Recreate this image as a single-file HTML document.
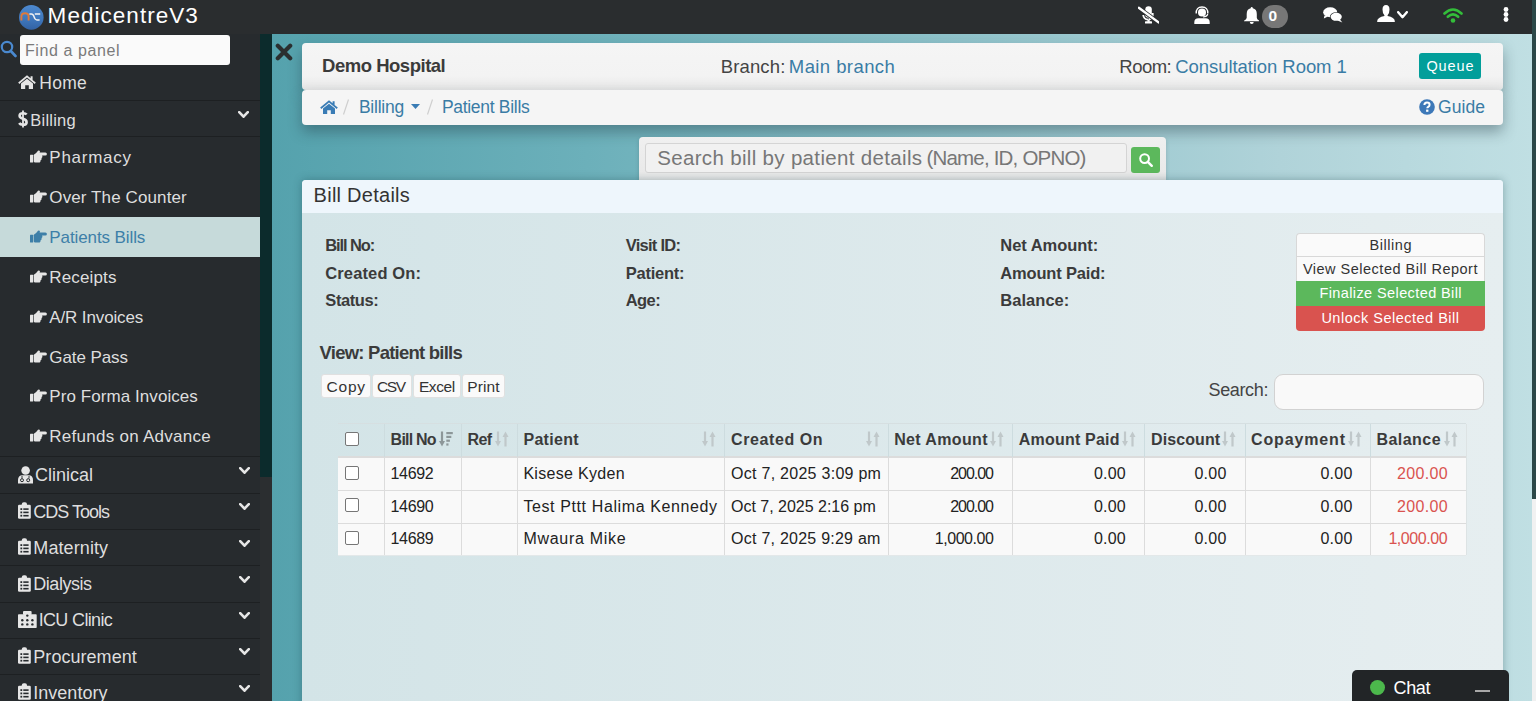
<!DOCTYPE html>
<html><head><meta charset="utf-8"><title>Patient Bills</title><style>
*{box-sizing:border-box;margin:0;padding:0}
html,body{width:1536px;height:701px;overflow:hidden;background:#26292c;font-family:"Liberation Sans",sans-serif}
.t{position:absolute;white-space:pre;line-height:1;font-family:"Liberation Sans",sans-serif}
.a{position:absolute}
#top{left:0;top:0;width:1536px;height:34px;background:#2a2d2f}
#side{left:0;top:34px;width:260px;height:667px;background:#272b2e}
.sep{position:absolute;left:0;width:260px;height:1px;background:#1d2022}
#sbtrack{left:260px;top:34px;width:12px;height:667px;background:#2b2e30}
#sbthumb{left:260px;top:34px;width:12px;height:443px;background:#0c2b2c}
#main{left:272px;top:34px;width:1260px;height:667px;background:linear-gradient(to right,#55a2ad 0%,#6cb0ba 25%,#90c3cb 55%,#b0d3d9 80%,#c0dfe3 100%)}
#rtrack{left:1532px;top:0;width:4px;height:701px;background:#f1f1f1}
#rthumb{left:1532px;top:0;width:4px;height:499px;background:#2c4848}
.card{position:absolute;left:302px;width:1201px;border-radius:4px;box-shadow:0 7px 14px rgba(30,50,60,.38)}
#hdr{top:43px;height:47px;background:linear-gradient(to bottom,#f5f5f5 0%,#f3f3f3 70%,#e6e6e6 100%)}
#bc{top:90px;height:35px;background:#f5f5f5}
#srch{left:639px;top:137px;width:527px;height:43px;background:linear-gradient(#f0f0f0,#e8e8e8);border-radius:4px 4px 0 0;box-shadow:0 2px 4px rgba(0,0,0,.15)}
#sinput{left:644.5px;top:143px;width:482px;height:30px;border:1px solid #d4d4d4;border-radius:3px;background:#f1f1f1}
#sbtn{left:1131px;top:147px;width:29px;height:26px;background:#5cb85c;border-radius:3px}
#panel{left:302px;top:180px;width:1201px;height:530px;border-radius:4px 4px 0 0;background:linear-gradient(to right,#d3e4e7,#e6eef0);box-shadow:0 0 8px rgba(20,60,70,.35);overflow:hidden}
#phead{left:0;top:0;width:1201px;height:33px;background:#eef6fc}
#queue{left:1418.5px;top:53px;width:62px;height:26px;background:#029e9a;border-radius:3px}
.grp{position:absolute;left:1296px;width:189px;height:25px}
.dtb{position:absolute;top:374px;height:24px;background:#fafafa;border:1px solid #e0e0e0;border-radius:3px}
#tsearch{left:1274px;top:373.5px;width:210px;height:36px;background:#f9f9f9;border:1px solid #d2d2d2;border-radius:9px}
#tbl{left:338px;top:423.5px;width:1128px;height:132px}
.hl{position:absolute;height:1px;background:#dcdcdc}
.vl{position:absolute;width:1px;background:#dcdcdc}
.cb{position:absolute;width:14px;height:14px;border:1px solid #767676;border-radius:2px;background:#fff}
#chat{left:1352px;top:670px;width:157px;height:40px;background:#222527;border-radius:5px 5px 0 0}
</style></head>
<body>
<div class="a" id="top"></div>
<div class="a" id="side"></div>
<div class="a" style="left:20px;top:35px;width:210px;height:30px;background:#fafafa;border-radius:3px"></div>
<div class="a" style="left:0;top:217px;width:260px;height:40px;background:#c6dada"></div>
<div class="sep" style="top:100px"></div>
<div class="sep" style="top:136px"></div>
<div class="sep" style="top:456px"></div>
<div class="sep" style="top:493px"></div>
<div class="sep" style="top:529px"></div>
<div class="sep" style="top:565px"></div>
<div class="sep" style="top:602px"></div>
<div class="sep" style="top:638px"></div>
<div class="sep" style="top:674px"></div>
<div class="a" id="sbtrack"></div>
<div class="a" id="sbthumb"></div>
<div class="a" id="main"></div>
<div class="a" id="rtrack"></div>
<div class="a" id="rthumb"></div>
<div class="card" id="hdr"></div>
<div class="card" id="bc"></div>
<div class="a" id="queue"></div>
<div class="a" id="srch"></div>
<div class="a" id="sinput"></div>
<div class="a" id="sbtn"></div>
<div class="card" id="panel"><div class="a" id="phead"></div></div>
<div class="a" id="tsearch"></div>
<div class="a" style="left:1296px;top:232.5px;width:189px;height:24px;background:#fafafa;border:1px solid #d8d8d8;border-bottom:none;border-radius:4px 4px 0 0"></div>
<div class="a" style="left:1296px;top:256px;width:189px;height:25px;background:#fafafa;border:1px solid #d8d8d8;border-bottom:none"></div>
<div class="a" style="left:1296px;top:281px;width:189px;height:24.5px;background:#5cb85c"></div>
<div class="a" style="left:1296px;top:305.5px;width:189px;height:25px;background:#d9534f;border-radius:0 0 4px 4px"></div>
<div class="dtb" style="left:321px;width:50px"></div>
<div class="dtb" style="left:372px;width:40px"></div>
<div class="dtb" style="left:413px;width:48px"></div>
<div class="dtb" style="left:462px;width:43px"></div>
<div class="a" style="left:338px;top:457px;width:1128px;height:98.5px;background:#f9f9f9"></div>
<div class="hl" style="left:338px;top:423px;width:1128px;background:#d6dfe1"></div>
<div class="hl" style="left:338px;top:456px;width:1128px;height:2px;background:#dcdcdc"></div>
<div class="hl" style="left:338px;top:490px;width:1128px"></div>
<div class="hl" style="left:338px;top:522.5px;width:1128px"></div>
<div class="hl" style="left:338px;top:555px;width:1128px;background:#e3e8e9"></div>
<div class="vl" style="left:384px;top:457px;height:98px"></div>
<div class="vl" style="left:384px;top:424px;height:33px;background:#cddcdf"></div>
<div class="vl" style="left:461px;top:457px;height:98px"></div>
<div class="vl" style="left:461px;top:424px;height:33px;background:#cddcdf"></div>
<div class="vl" style="left:517px;top:457px;height:98px"></div>
<div class="vl" style="left:517px;top:424px;height:33px;background:#cddcdf"></div>
<div class="vl" style="left:724px;top:457px;height:98px"></div>
<div class="vl" style="left:724px;top:424px;height:33px;background:#cddcdf"></div>
<div class="vl" style="left:888px;top:457px;height:98px"></div>
<div class="vl" style="left:888px;top:424px;height:33px;background:#cddcdf"></div>
<div class="vl" style="left:1012px;top:457px;height:98px"></div>
<div class="vl" style="left:1012px;top:424px;height:33px;background:#cddcdf"></div>
<div class="vl" style="left:1144px;top:457px;height:98px"></div>
<div class="vl" style="left:1144px;top:424px;height:33px;background:#cddcdf"></div>
<div class="vl" style="left:1245px;top:457px;height:98px"></div>
<div class="vl" style="left:1245px;top:424px;height:33px;background:#cddcdf"></div>
<div class="vl" style="left:1370px;top:457px;height:98px"></div>
<div class="vl" style="left:1370px;top:424px;height:33px;background:#cddcdf"></div>
<div class="vl" style="left:1466px;top:424px;height:131px;background:#dde3e4"></div>
<div class="cb" style="left:344.5px;top:431.5px"></div>
<div class="cb" style="left:344.5px;top:465.5px"></div>
<div class="cb" style="left:344.5px;top:498px"></div>
<div class="cb" style="left:344.5px;top:530.5px"></div>
<svg class="a" style="left:439px;top:430.5px;" width="14" height="16" viewBox="0 0 14 16"><path d="M3 0.5 V11" stroke="#8d9799" stroke-width="2.2"/><path d="M0 10 H6 L3 15.5 Z" fill="#8d9799"/><rect x="7.3" y="1" width="6.5" height="2.2" fill="#8d9799"/><rect x="7.3" y="4.8" width="5" height="2.2" fill="#8d9799"/><rect x="7.3" y="8.6" width="3.6" height="2.2" fill="#8d9799"/><rect x="7.3" y="12.4" width="2.2" height="2.2" fill="#8d9799"/></svg>
<svg class="a" style="left:494.5px;top:430.5px;" width="14" height="16" viewBox="0 0 14 16"><path d="M3 0.5 V11" stroke="#c0c8ca" stroke-width="2.2"/><path d="M0 10 H6 L3 15.5 Z" fill="#c0c8ca"/><path d="M10.5 5 V15.5" stroke="#c0c8ca" stroke-width="2.2"/><path d="M7.5 6 H13.5 L10.5 0.5 Z" fill="#c0c8ca"/></svg>
<svg class="a" style="left:701.5px;top:430.5px;" width="14" height="16" viewBox="0 0 14 16"><path d="M3 0.5 V11" stroke="#c0c8ca" stroke-width="2.2"/><path d="M0 10 H6 L3 15.5 Z" fill="#c0c8ca"/><path d="M10.5 5 V15.5" stroke="#c0c8ca" stroke-width="2.2"/><path d="M7.5 6 H13.5 L10.5 0.5 Z" fill="#c0c8ca"/></svg>
<svg class="a" style="left:865.5px;top:430.5px;" width="14" height="16" viewBox="0 0 14 16"><path d="M3 0.5 V11" stroke="#c0c8ca" stroke-width="2.2"/><path d="M0 10 H6 L3 15.5 Z" fill="#c0c8ca"/><path d="M10.5 5 V15.5" stroke="#c0c8ca" stroke-width="2.2"/><path d="M7.5 6 H13.5 L10.5 0.5 Z" fill="#c0c8ca"/></svg>
<svg class="a" style="left:990px;top:430.5px;" width="14" height="16" viewBox="0 0 14 16"><path d="M3 0.5 V11" stroke="#c0c8ca" stroke-width="2.2"/><path d="M0 10 H6 L3 15.5 Z" fill="#c0c8ca"/><path d="M10.5 5 V15.5" stroke="#c0c8ca" stroke-width="2.2"/><path d="M7.5 6 H13.5 L10.5 0.5 Z" fill="#c0c8ca"/></svg>
<svg class="a" style="left:1122px;top:430.5px;" width="14" height="16" viewBox="0 0 14 16"><path d="M3 0.5 V11" stroke="#c0c8ca" stroke-width="2.2"/><path d="M0 10 H6 L3 15.5 Z" fill="#c0c8ca"/><path d="M10.5 5 V15.5" stroke="#c0c8ca" stroke-width="2.2"/><path d="M7.5 6 H13.5 L10.5 0.5 Z" fill="#c0c8ca"/></svg>
<svg class="a" style="left:1221.5px;top:430.5px;" width="14" height="16" viewBox="0 0 14 16"><path d="M3 0.5 V11" stroke="#c0c8ca" stroke-width="2.2"/><path d="M0 10 H6 L3 15.5 Z" fill="#c0c8ca"/><path d="M10.5 5 V15.5" stroke="#c0c8ca" stroke-width="2.2"/><path d="M7.5 6 H13.5 L10.5 0.5 Z" fill="#c0c8ca"/></svg>
<svg class="a" style="left:1347.5px;top:430.5px;" width="14" height="16" viewBox="0 0 14 16"><path d="M3 0.5 V11" stroke="#c0c8ca" stroke-width="2.2"/><path d="M0 10 H6 L3 15.5 Z" fill="#c0c8ca"/><path d="M10.5 5 V15.5" stroke="#c0c8ca" stroke-width="2.2"/><path d="M7.5 6 H13.5 L10.5 0.5 Z" fill="#c0c8ca"/></svg>
<svg class="a" style="left:1443.5px;top:430.5px;" width="14" height="16" viewBox="0 0 14 16"><path d="M3 0.5 V11" stroke="#c0c8ca" stroke-width="2.2"/><path d="M0 10 H6 L3 15.5 Z" fill="#c0c8ca"/><path d="M10.5 5 V15.5" stroke="#c0c8ca" stroke-width="2.2"/><path d="M7.5 6 H13.5 L10.5 0.5 Z" fill="#c0c8ca"/></svg>
<div class="a" id="chat"></div>
<svg class="a" style="left:18.5px;top:4.6px;" width="25" height="25" viewBox="0 0 25 25"><defs><linearGradient id="lg" x1="0" y1="0" x2="0" y2="1"><stop offset="0" stop-color="#4d89cf"/><stop offset="0.55" stop-color="#3f78bd"/><stop offset="1" stop-color="#3262a4"/></linearGradient></defs>
<circle cx="12.3" cy="12.4" r="12.3" fill="url(#lg)"/>
<path d="M2.4 15.6 V11.6 Q2.4 8.3 6 8.3 Q9.6 8.3 9.6 11.6 V15.6" stroke="#e07a3a" stroke-width="1.9" fill="none"/>
<path d="M10.4 8.9 H12.4 Q14.1 8.9 15 11.6 Q16 14.9 18 14.9 H20.6 M15.8 8.9 H21.2" stroke="#f4f4f4" stroke-width="1.5" fill="none"/></svg>
<svg class="a" style="left:0px;top:40px;" width="17" height="18" viewBox="0 0 17 18"><circle cx="7" cy="7" r="5.2" stroke="#4a89cf" stroke-width="2.2" fill="none"/><path d="M10.8 11 L15.5 16" stroke="#4a89cf" stroke-width="2.6" stroke-linecap="round"/></svg>
<svg class="a" style="left:18px;top:75px;" width="18" height="14" viewBox="0 0 18 14"><path d="M9 0.3 L0.2 7.6 L1.3 8.9 L9 2.5 L16.7 8.9 L17.8 7.6 L14.6 4.9 V1.2 H12.6 V3.2 Z" fill="#e6e6e6"/><path d="M3 8.6 L9 3.7 L15 8.6 V14 H10.8 V10.2 H7.2 V14 H3 Z" fill="#e6e6e6"/></svg>
<svg class="a" style="left:17.5px;top:109.5px;" width="10" height="18" viewBox="0 0 10 18"><path d="M5 0.5 V17.5" stroke="#e6e6e6" stroke-width="1.8"/><path d="M8.6 4.6 Q7.6 3.2 5 3.2 Q1.6 3.2 1.6 5.8 Q1.6 7.9 5 8.8 Q8.6 9.8 8.6 12.2 Q8.6 14.8 5 14.8 Q2.2 14.8 1.2 13" stroke="#e6e6e6" stroke-width="2.6" fill="none"/></svg>
<svg class="a" style="left:29.6px;top:150.3px;" width="17" height="13" viewBox="0 0 17 13"><rect x="0" y="4.8" width="3.2" height="7.8" rx="0.5" fill="#e6e6e6"/><path d="M3.8 4.8 Q6.5 3.2 8 0.8 Q9.2 -0.2 10 1.2 L9.6 2.6 H15.4 Q16.9 2.6 16.9 4.1 Q16.9 5.6 15.4 5.6 H12 Q12.6 6.3 12.3 7.2 Q12.1 7.8 11.4 8 Q11.9 8.7 11.5 9.5 Q11.1 10.1 10.5 10.2 Q10.7 11 10.3 11.7 Q9.8 12.6 8.8 12.6 H5.2 Q3.8 12.6 3.8 11.2 Z" fill="#e6e6e6"/></svg>
<svg class="a" style="left:29.6px;top:190.15px;" width="17" height="13" viewBox="0 0 17 13"><rect x="0" y="4.8" width="3.2" height="7.8" rx="0.5" fill="#e6e6e6"/><path d="M3.8 4.8 Q6.5 3.2 8 0.8 Q9.2 -0.2 10 1.2 L9.6 2.6 H15.4 Q16.9 2.6 16.9 4.1 Q16.9 5.6 15.4 5.6 H12 Q12.6 6.3 12.3 7.2 Q12.1 7.8 11.4 8 Q11.9 8.7 11.5 9.5 Q11.1 10.1 10.5 10.2 Q10.7 11 10.3 11.7 Q9.8 12.6 8.8 12.6 H5.2 Q3.8 12.6 3.8 11.2 Z" fill="#e6e6e6"/></svg>
<svg class="a" style="left:29.6px;top:230.0px;" width="17" height="13" viewBox="0 0 17 13"><rect x="0" y="4.8" width="3.2" height="7.8" rx="0.5" fill="#3d7fa8"/><path d="M3.8 4.8 Q6.5 3.2 8 0.8 Q9.2 -0.2 10 1.2 L9.6 2.6 H15.4 Q16.9 2.6 16.9 4.1 Q16.9 5.6 15.4 5.6 H12 Q12.6 6.3 12.3 7.2 Q12.1 7.8 11.4 8 Q11.9 8.7 11.5 9.5 Q11.1 10.1 10.5 10.2 Q10.7 11 10.3 11.7 Q9.8 12.6 8.8 12.6 H5.2 Q3.8 12.6 3.8 11.2 Z" fill="#3d7fa8"/></svg>
<svg class="a" style="left:29.6px;top:269.85px;" width="17" height="13" viewBox="0 0 17 13"><rect x="0" y="4.8" width="3.2" height="7.8" rx="0.5" fill="#e6e6e6"/><path d="M3.8 4.8 Q6.5 3.2 8 0.8 Q9.2 -0.2 10 1.2 L9.6 2.6 H15.4 Q16.9 2.6 16.9 4.1 Q16.9 5.6 15.4 5.6 H12 Q12.6 6.3 12.3 7.2 Q12.1 7.8 11.4 8 Q11.9 8.7 11.5 9.5 Q11.1 10.1 10.5 10.2 Q10.7 11 10.3 11.7 Q9.8 12.6 8.8 12.6 H5.2 Q3.8 12.6 3.8 11.2 Z" fill="#e6e6e6"/></svg>
<svg class="a" style="left:29.6px;top:309.70000000000005px;" width="17" height="13" viewBox="0 0 17 13"><rect x="0" y="4.8" width="3.2" height="7.8" rx="0.5" fill="#e6e6e6"/><path d="M3.8 4.8 Q6.5 3.2 8 0.8 Q9.2 -0.2 10 1.2 L9.6 2.6 H15.4 Q16.9 2.6 16.9 4.1 Q16.9 5.6 15.4 5.6 H12 Q12.6 6.3 12.3 7.2 Q12.1 7.8 11.4 8 Q11.9 8.7 11.5 9.5 Q11.1 10.1 10.5 10.2 Q10.7 11 10.3 11.7 Q9.8 12.6 8.8 12.6 H5.2 Q3.8 12.6 3.8 11.2 Z" fill="#e6e6e6"/></svg>
<svg class="a" style="left:29.6px;top:349.55px;" width="17" height="13" viewBox="0 0 17 13"><rect x="0" y="4.8" width="3.2" height="7.8" rx="0.5" fill="#e6e6e6"/><path d="M3.8 4.8 Q6.5 3.2 8 0.8 Q9.2 -0.2 10 1.2 L9.6 2.6 H15.4 Q16.9 2.6 16.9 4.1 Q16.9 5.6 15.4 5.6 H12 Q12.6 6.3 12.3 7.2 Q12.1 7.8 11.4 8 Q11.9 8.7 11.5 9.5 Q11.1 10.1 10.5 10.2 Q10.7 11 10.3 11.7 Q9.8 12.6 8.8 12.6 H5.2 Q3.8 12.6 3.8 11.2 Z" fill="#e6e6e6"/></svg>
<svg class="a" style="left:29.6px;top:389.40000000000003px;" width="17" height="13" viewBox="0 0 17 13"><rect x="0" y="4.8" width="3.2" height="7.8" rx="0.5" fill="#e6e6e6"/><path d="M3.8 4.8 Q6.5 3.2 8 0.8 Q9.2 -0.2 10 1.2 L9.6 2.6 H15.4 Q16.9 2.6 16.9 4.1 Q16.9 5.6 15.4 5.6 H12 Q12.6 6.3 12.3 7.2 Q12.1 7.8 11.4 8 Q11.9 8.7 11.5 9.5 Q11.1 10.1 10.5 10.2 Q10.7 11 10.3 11.7 Q9.8 12.6 8.8 12.6 H5.2 Q3.8 12.6 3.8 11.2 Z" fill="#e6e6e6"/></svg>
<svg class="a" style="left:29.6px;top:429.25px;" width="17" height="13" viewBox="0 0 17 13"><rect x="0" y="4.8" width="3.2" height="7.8" rx="0.5" fill="#e6e6e6"/><path d="M3.8 4.8 Q6.5 3.2 8 0.8 Q9.2 -0.2 10 1.2 L9.6 2.6 H15.4 Q16.9 2.6 16.9 4.1 Q16.9 5.6 15.4 5.6 H12 Q12.6 6.3 12.3 7.2 Q12.1 7.8 11.4 8 Q11.9 8.7 11.5 9.5 Q11.1 10.1 10.5 10.2 Q10.7 11 10.3 11.7 Q9.8 12.6 8.8 12.6 H5.2 Q3.8 12.6 3.8 11.2 Z" fill="#e6e6e6"/></svg>
<svg class="a" style="left:238px;top:111px;" width="11" height="7" viewBox="0 0 11 7"><path d="M1.2 1.2 L5.5 5.7 L9.8 1.2" stroke="#e6e6e6" stroke-width="2.6" fill="none" stroke-linecap="round" stroke-linejoin="round"/></svg>
<svg class="a" style="left:238.5px;top:467.0px;" width="11" height="7" viewBox="0 0 11 7"><path d="M1.2 1.2 L5.5 5.7 L9.8 1.2" stroke="#e6e6e6" stroke-width="2.6" fill="none" stroke-linecap="round" stroke-linejoin="round"/></svg>
<svg class="a" style="left:238.5px;top:503.25px;" width="11" height="7" viewBox="0 0 11 7"><path d="M1.2 1.2 L5.5 5.7 L9.8 1.2" stroke="#e6e6e6" stroke-width="2.6" fill="none" stroke-linecap="round" stroke-linejoin="round"/></svg>
<svg class="a" style="left:238.5px;top:539.5px;" width="11" height="7" viewBox="0 0 11 7"><path d="M1.2 1.2 L5.5 5.7 L9.8 1.2" stroke="#e6e6e6" stroke-width="2.6" fill="none" stroke-linecap="round" stroke-linejoin="round"/></svg>
<svg class="a" style="left:238.5px;top:575.75px;" width="11" height="7" viewBox="0 0 11 7"><path d="M1.2 1.2 L5.5 5.7 L9.8 1.2" stroke="#e6e6e6" stroke-width="2.6" fill="none" stroke-linecap="round" stroke-linejoin="round"/></svg>
<svg class="a" style="left:238.5px;top:612.0px;" width="11" height="7" viewBox="0 0 11 7"><path d="M1.2 1.2 L5.5 5.7 L9.8 1.2" stroke="#e6e6e6" stroke-width="2.6" fill="none" stroke-linecap="round" stroke-linejoin="round"/></svg>
<svg class="a" style="left:238.5px;top:648.25px;" width="11" height="7" viewBox="0 0 11 7"><path d="M1.2 1.2 L5.5 5.7 L9.8 1.2" stroke="#e6e6e6" stroke-width="2.6" fill="none" stroke-linecap="round" stroke-linejoin="round"/></svg>
<svg class="a" style="left:238.5px;top:684.5px;" width="11" height="7" viewBox="0 0 11 7"><path d="M1.2 1.2 L5.5 5.7 L9.8 1.2" stroke="#e6e6e6" stroke-width="2.6" fill="none" stroke-linecap="round" stroke-linejoin="round"/></svg>
<svg class="a" style="left:17.5px;top:465.5px;" width="15" height="18" viewBox="0 0 15 18"><circle cx="7.6" cy="4.5" r="4.3" fill="#e6e6e6"/><path d="M0 17.5 V14 Q0 9.3 4.5 9.3 H10.5 Q15 9.3 15 14 V17.5 Z" fill="#e6e6e6"/><path d="M4 10 V12.5 M11 10 V12.5" stroke="#272b2e" stroke-width="0.9"/><circle cx="4" cy="14.2" r="1.5" fill="none" stroke="#272b2e" stroke-width="1"/><circle cx="10.2" cy="14.2" r="1.5" fill="none" stroke="#272b2e" stroke-width="1"/></svg>
<svg class="a" style="left:17.8px;top:502.2px;" width="13" height="17" viewBox="0 0 13 17"><rect x="0" y="2.8" width="12.8" height="14" rx="1.3" fill="#e6e6e6"/><rect x="3.8" y="0.3" width="5.2" height="4" rx="2" fill="#e6e6e6"/><rect x="2.4" y="6.2" width="1.8" height="1.8" fill="#272b2e"/><rect x="2.4" y="9.5" width="1.8" height="1.8" fill="#272b2e"/><rect x="2.4" y="12.8" width="1.8" height="1.8" fill="#272b2e"/><rect x="5.3" y="6.3" width="5.3" height="1.6" fill="#272b2e"/><rect x="5.3" y="9.6" width="5.3" height="1.6" fill="#272b2e"/><rect x="5.3" y="12.9" width="5.3" height="1.6" fill="#272b2e"/></svg>
<svg class="a" style="left:17.8px;top:538.45px;" width="13" height="17" viewBox="0 0 13 17"><rect x="0" y="2.8" width="12.8" height="14" rx="1.3" fill="#e6e6e6"/><rect x="3.8" y="0.3" width="5.2" height="4" rx="2" fill="#e6e6e6"/><rect x="2.4" y="6.2" width="1.8" height="1.8" fill="#272b2e"/><rect x="2.4" y="9.5" width="1.8" height="1.8" fill="#272b2e"/><rect x="2.4" y="12.8" width="1.8" height="1.8" fill="#272b2e"/><rect x="5.3" y="6.3" width="5.3" height="1.6" fill="#272b2e"/><rect x="5.3" y="9.6" width="5.3" height="1.6" fill="#272b2e"/><rect x="5.3" y="12.9" width="5.3" height="1.6" fill="#272b2e"/></svg>
<svg class="a" style="left:17.8px;top:574.7px;" width="13" height="17" viewBox="0 0 13 17"><rect x="0" y="2.8" width="12.8" height="14" rx="1.3" fill="#e6e6e6"/><rect x="3.8" y="0.3" width="5.2" height="4" rx="2" fill="#e6e6e6"/><rect x="2.4" y="6.2" width="1.8" height="1.8" fill="#272b2e"/><rect x="2.4" y="9.5" width="1.8" height="1.8" fill="#272b2e"/><rect x="2.4" y="12.8" width="1.8" height="1.8" fill="#272b2e"/><rect x="5.3" y="6.3" width="5.3" height="1.6" fill="#272b2e"/><rect x="5.3" y="9.6" width="5.3" height="1.6" fill="#272b2e"/><rect x="5.3" y="12.9" width="5.3" height="1.6" fill="#272b2e"/></svg>
<svg class="a" style="left:17.8px;top:647.2px;" width="13" height="17" viewBox="0 0 13 17"><rect x="0" y="2.8" width="12.8" height="14" rx="1.3" fill="#e6e6e6"/><rect x="3.8" y="0.3" width="5.2" height="4" rx="2" fill="#e6e6e6"/><rect x="2.4" y="6.2" width="1.8" height="1.8" fill="#272b2e"/><rect x="2.4" y="9.5" width="1.8" height="1.8" fill="#272b2e"/><rect x="2.4" y="12.8" width="1.8" height="1.8" fill="#272b2e"/><rect x="5.3" y="6.3" width="5.3" height="1.6" fill="#272b2e"/><rect x="5.3" y="9.6" width="5.3" height="1.6" fill="#272b2e"/><rect x="5.3" y="12.9" width="5.3" height="1.6" fill="#272b2e"/></svg>
<svg class="a" style="left:17.8px;top:683.45px;" width="13" height="17" viewBox="0 0 13 17"><rect x="0" y="2.8" width="12.8" height="14" rx="1.3" fill="#e6e6e6"/><rect x="3.8" y="0.3" width="5.2" height="4" rx="2" fill="#e6e6e6"/><rect x="2.4" y="6.2" width="1.8" height="1.8" fill="#272b2e"/><rect x="2.4" y="9.5" width="1.8" height="1.8" fill="#272b2e"/><rect x="2.4" y="12.8" width="1.8" height="1.8" fill="#272b2e"/><rect x="5.3" y="6.3" width="5.3" height="1.6" fill="#272b2e"/><rect x="5.3" y="9.6" width="5.3" height="1.6" fill="#272b2e"/><rect x="5.3" y="12.9" width="5.3" height="1.6" fill="#272b2e"/></svg>
<svg class="a" style="left:17.9px;top:610.8px;" width="19" height="17" viewBox="0 0 19 17"><rect x="5" y="0" width="8.6" height="4" rx="1" fill="#e6e6e6"/><rect x="0" y="3.2" width="18.7" height="13.8" rx="0.8" fill="#e6e6e6"/><circle cx="9.3" cy="4.6" r="1.2" fill="#272b2e"/><circle cx="4.3" cy="9.3" r="1.2" fill="#272b2e"/><circle cx="9.3" cy="9.3" r="1.2" fill="#272b2e"/><circle cx="14.4" cy="9.3" r="1.2" fill="#272b2e"/><circle cx="4.3" cy="13.4" r="1.2" fill="#272b2e"/><circle cx="9.3" cy="13.4" r="1.2" fill="#272b2e"/><circle cx="14.4" cy="13.4" r="1.2" fill="#272b2e"/></svg>
<svg class="a" style="left:275px;top:43px;" width="18" height="18" viewBox="0 0 18 18"><path d="M2.8 2.8 L15.2 15.2 M15.2 2.8 L2.8 15.2" stroke="#2b2f30" stroke-width="4.2" stroke-linecap="round"/></svg>
<svg class="a" style="left:320px;top:99.5px;" width="18" height="14" viewBox="0 0 18 14"><path d="M9 0.3 L0.2 7.6 L1.3 8.9 L9 2.5 L16.7 8.9 L17.8 7.6 L14.6 4.9 V1.2 H12.6 V3.2 Z" fill="#3a7cb5"/><path d="M3 8.6 L9 3.7 L15 8.6 V14 H10.8 V10.2 H7.2 V14 H3 Z" fill="#3a7cb5"/></svg>
<svg class="a" style="left:342px;top:99px;" width="8" height="16" viewBox="0 0 8 16"><path d="M6.5 0.5 L1.5 15.5" stroke="#cfcfcf" stroke-width="1.2"/></svg>
<svg class="a" style="left:426px;top:99px;" width="8" height="16" viewBox="0 0 8 16"><path d="M6.5 0.5 L1.5 15.5" stroke="#cfcfcf" stroke-width="1.2"/></svg>
<svg class="a" style="left:410.5px;top:104px;" width="9" height="5" viewBox="0 0 9 5"><path d="M0 0 H9 L4.5 5 Z" fill="#3a7cb5"/></svg>
<svg class="a" style="left:1419px;top:98.8px;" width="16" height="16" viewBox="0 0 16 16"><circle cx="8" cy="8" r="7.8" fill="#3d78b8"/><path d="M5.4 6 Q5.4 3.4 8 3.4 Q10.6 3.4 10.6 5.7 Q10.6 7 9.2 7.8 Q8.3 8.3 8.3 9.3" stroke="#fff" stroke-width="2" fill="none"/><rect x="7.1" y="10.6" width="2.3" height="2.2" fill="#fff"/></svg>
<svg class="a" style="left:1137.5px;top:152px;" width="16" height="16" viewBox="0 0 16 16"><circle cx="6.6" cy="6.6" r="4.4" stroke="#fff" stroke-width="2" fill="none"/><path d="M9.8 9.8 L13.8 13.8" stroke="#fff" stroke-width="2.4" stroke-linecap="round"/></svg>
<svg class="a" style="left:1138px;top:6px;" width="21" height="18" viewBox="0 0 21 18"><path d="M10.6 0.3 Q13.8 0.3 13.8 3.5 V9 Q13.8 11.8 10.6 11.8 Q7.3 11.8 7.3 9 V3.5 Q7.3 0.3 10.6 0.3 Z" fill="#fff"/><path d="M14.6 7 V9.5 Q14.6 13 10.6 13.2" stroke="#fff" stroke-width="2" fill="none"/><path d="M5.2 9 Q5.6 13.2 10 13.6" stroke="#fff" stroke-width="1.8" fill="none"/><rect x="9.5" y="13.5" width="2.2" height="2.4" fill="#fff"/><rect x="7" y="15.3" width="7" height="2.2" rx="0.6" fill="#fff"/><path d="M0.8 1.8 L20.5 16.4" stroke="#2a2d2f" stroke-width="4"/><path d="M0.8 1.8 L20.5 16.4" stroke="#fff" stroke-width="2.4" stroke-linecap="round"/></svg>
<svg class="a" style="left:1193.5px;top:5.5px;" width="16" height="18.5" viewBox="0 0 16 18.5"><circle cx="8" cy="6.5" r="4" fill="#fff"/><path d="M2.2 7.5 Q2 1 8 1 Q14 1 13.8 7.5" stroke="#fff" stroke-width="1.4" fill="none"/><path d="M13.8 8 Q13 10.8 9 11" stroke="#fff" stroke-width="1.1" fill="none"/><path d="M0.3 18.5 V16 Q0.3 12.2 4.5 12.2 H11.5 Q15.7 12.2 15.7 16 V18.5 Z" fill="#fff"/></svg>
<svg class="a" style="left:1243.5px;top:6.5px;" width="15.5" height="17" viewBox="0 0 15.5 17"><path d="M7.75 0 Q8.8 0 8.8 1.2 Q12.8 2 12.8 7 V10.8 Q12.8 12.4 15.5 13.8 V14.3 H0 V13.8 Q2.7 12.4 2.7 10.8 V7 Q2.7 2 6.7 1.2 Q6.7 0 7.75 0 Z" fill="#fff"/><path d="M5.8 15 Q5.8 17 7.75 17 Q9.7 17 9.7 15 Z" fill="#fff"/></svg>
<div class="a" style="left:1261.5px;top:5px;width:26px;height:22.5px;border-radius:11.5px;background:#777"></div>
<span class="t" style="left:1268.5px;top:8.2px;font-size:15.5px;font-weight:700;color:#fff">0</span>
<svg class="a" style="left:1323px;top:7px;" width="20" height="16" viewBox="0 0 20 16"><ellipse cx="7.2" cy="5.2" rx="7" ry="5" fill="#fff"/><path d="M1.5 8.5 L0.8 11.5 L5 9.5 Z" fill="#fff"/><ellipse cx="13.2" cy="9.8" rx="6.3" ry="4.6" fill="#2a2d2f"/><ellipse cx="13.2" cy="9.8" rx="5.6" ry="4" fill="#fff"/><path d="M17 12.5 L19.3 15.5 L14.5 13.6 Z" fill="#fff"/></svg>
<svg class="a" style="left:1376.5px;top:5px;" width="18" height="17" viewBox="0 0 18 17"><path d="M9 0 Q12.5 0 12.5 4.5 Q12.5 8.5 10.6 10.2 V11 Q17.5 12.3 17.8 16 V17 H0.2 V16 Q0.5 12.3 7.4 11 V10.2 Q5.5 8.5 5.5 4.5 Q5.5 0 9 0 Z" fill="#fff"/></svg>
<svg class="a" style="left:1397px;top:11px;" width="11" height="7.5" viewBox="0 0 11 7.5"><path d="M1.2 1.2 L5.5 6.2 L9.8 1.2" stroke="#fff" stroke-width="2.4" fill="none" stroke-linecap="round" stroke-linejoin="round"/></svg>
<svg class="a" style="left:1443px;top:7.5px;" width="20" height="15" viewBox="0 0 20 15"><path d="M1.5 5.5 Q10 -2.5 18.5 5.5" stroke="#33bd3a" stroke-width="2.6" fill="none" stroke-linecap="round"/><path d="M4.8 8.8 Q10 4 15.2 8.8" stroke="#33bd3a" stroke-width="2.6" fill="none" stroke-linecap="round"/><circle cx="10" cy="12.5" r="2.3" fill="#33bd3a"/></svg>
<svg class="a" style="left:1503px;top:7px;" width="6" height="15" viewBox="0 0 6 15"><circle cx="3" cy="2.5" r="2.4" fill="#fff"/><circle cx="3" cy="7.5" r="2.4" fill="#fff"/><circle cx="3" cy="12.5" r="2.4" fill="#fff"/></svg>
<div class="a" style="left:1370px;top:680px;width:15px;height:15px;border-radius:50%;background:#4cb84c"></div>
<div class="a" style="left:1474.5px;top:690px;width:15.5px;height:2px;background:#a8a8a8"></div>
<span class="t" style="left:47.6px;top:4.7px;font-size:22.5px;font-weight:400;color:#ffffff;letter-spacing:1.04px;">MedicentreV3</span>
<span class="t" style="left:24.9px;top:42.5px;font-size:16.0px;font-weight:400;color:#7a7a7a;letter-spacing:0.61px;">Find a panel</span>
<span class="t" style="left:39.3px;top:74.7px;font-size:17.5px;font-weight:400;color:#dedede;letter-spacing:0.24px;">Home</span>
<span class="t" style="left:30.3px;top:111.5px;font-size:16.5px;font-weight:400;color:#dedede;letter-spacing:0.21px;">Billing</span>
<span class="t" style="left:49.3px;top:149.3px;font-size:17.0px;font-weight:400;color:#dedede;letter-spacing:0.75px;">Pharmacy</span>
<span class="t" style="left:49.3px;top:189.2px;font-size:17.0px;font-weight:400;color:#dedede;letter-spacing:0.11px;">Over The Counter</span>
<span class="t" style="left:49.3px;top:229.0px;font-size:17.0px;font-weight:400;color:#3d7fa8;letter-spacing:-0.10px;">Patients Bills</span>
<span class="t" style="left:49.3px;top:268.9px;font-size:17.0px;font-weight:400;color:#dedede;letter-spacing:0.15px;">Receipts</span>
<span class="t" style="left:49.3px;top:308.7px;font-size:17.0px;font-weight:400;color:#dedede;letter-spacing:-0.13px;">A/R Invoices</span>
<span class="t" style="left:49.3px;top:348.6px;font-size:17.0px;font-weight:400;color:#dedede;letter-spacing:-0.08px;">Gate Pass</span>
<span class="t" style="left:49.3px;top:388.4px;font-size:17.0px;font-weight:400;color:#dedede;letter-spacing:0.07px;">Pro Forma Invoices</span>
<span class="t" style="left:49.3px;top:428.3px;font-size:17.0px;font-weight:400;color:#dedede;letter-spacing:0.26px;">Refunds on Advance</span>
<span class="t" style="left:35.1px;top:466.4px;font-size:18.0px;font-weight:400;color:#dedede;letter-spacing:0.00px;">Clinical</span>
<span class="t" style="left:33.3px;top:502.7px;font-size:18.0px;font-weight:400;color:#dedede;letter-spacing:-1.01px;">CDS Tools</span>
<span class="t" style="left:33.3px;top:538.9px;font-size:18.0px;font-weight:400;color:#dedede;letter-spacing:0.10px;">Maternity</span>
<span class="t" style="left:33.3px;top:575.2px;font-size:18.0px;font-weight:400;color:#dedede;letter-spacing:-0.47px;">Dialysis</span>
<span class="t" style="left:38.7px;top:611.4px;font-size:18.0px;font-weight:400;color:#dedede;letter-spacing:-0.66px;">ICU Clinic</span>
<span class="t" style="left:33.3px;top:647.7px;font-size:18.0px;font-weight:400;color:#dedede;letter-spacing:0.04px;">Procurement</span>
<span class="t" style="left:33.3px;top:683.9px;font-size:18.0px;font-weight:400;color:#dedede;letter-spacing:0.01px;">Inventory</span>
<span class="t" style="left:322.0px;top:57.4px;font-size:18.5px;font-weight:700;color:#3b3b3b;letter-spacing:-0.48px;">Demo Hospital</span>
<span class="t" style="left:720.8px;top:57.6px;font-size:18.5px;font-weight:400;color:#444444;letter-spacing:0.12px;">Branch:</span>
<span class="t" style="left:788.8px;top:57.6px;font-size:18.5px;font-weight:400;color:#3a7ca5;letter-spacing:0.42px;">Main branch</span>
<span class="t" style="left:1119.3px;top:57.6px;font-size:18.5px;font-weight:400;color:#444444;letter-spacing:-0.51px;">Room:</span>
<span class="t" style="left:1175.3px;top:57.6px;font-size:18.5px;font-weight:400;color:#3a7ca5;letter-spacing:-0.07px;">Consultation Room 1</span>
<span class="t" style="left:1426.4px;top:58.7px;font-size:14.5px;font-weight:400;color:#ffffff;letter-spacing:0.90px;">Queue</span>
<span class="t" style="left:358.9px;top:99.0px;font-size:17.5px;font-weight:400;color:#3a7ca5;letter-spacing:-0.23px;">Billing</span>
<span class="t" style="left:441.9px;top:99.0px;font-size:17.5px;font-weight:400;color:#3a7ca5;letter-spacing:-0.30px;">Patient Bills</span>
<span class="t" style="left:1438.1px;top:99.0px;font-size:17.5px;font-weight:400;color:#3a7ca5;letter-spacing:0.05px;">Guide</span>
<span class="t" style="left:657.2px;top:148.3px;font-size:20.5px;font-weight:400;color:#777777;letter-spacing:0.33px;">Search bill by patient details</span>
<span class="t" style="left:926.4px;top:148.3px;font-size:20.5px;font-weight:400;color:#777777;letter-spacing:-0.80px;">(Name, ID, OPNO)</span>
<span class="t" style="left:313.6px;top:185.3px;font-size:20.0px;font-weight:400;color:#333333;letter-spacing:0.26px;">Bill Details</span>
<span class="t" style="left:325.3px;top:237.1px;font-size:16.5px;font-weight:700;color:#3b3b3b;letter-spacing:-1.12px;">Bill No:</span>
<span class="t" style="left:625.7px;top:237.1px;font-size:16.5px;font-weight:700;color:#3b3b3b;letter-spacing:-0.73px;">Visit ID:</span>
<span class="t" style="left:1000.3px;top:237.1px;font-size:16.5px;font-weight:700;color:#3b3b3b;letter-spacing:-0.05px;">Net Amount:</span>
<span class="t" style="left:325.3px;top:264.6px;font-size:16.5px;font-weight:700;color:#3b3b3b;letter-spacing:0.12px;">Created On:</span>
<span class="t" style="left:625.7px;top:264.6px;font-size:16.5px;font-weight:700;color:#3b3b3b;letter-spacing:-0.23px;">Patient:</span>
<span class="t" style="left:1000.3px;top:264.6px;font-size:16.5px;font-weight:700;color:#3b3b3b;letter-spacing:-0.18px;">Amount Paid:</span>
<span class="t" style="left:325.3px;top:292.1px;font-size:16.5px;font-weight:700;color:#3b3b3b;letter-spacing:-0.40px;">Status:</span>
<span class="t" style="left:625.7px;top:292.1px;font-size:16.5px;font-weight:700;color:#3b3b3b;letter-spacing:-0.55px;">Age:</span>
<span class="t" style="left:1000.3px;top:292.1px;font-size:16.5px;font-weight:700;color:#3b3b3b;letter-spacing:0.03px;">Balance:</span>
<span class="t" style="left:319.6px;top:343.6px;font-size:18.5px;font-weight:700;color:#3b3b3b;letter-spacing:-0.77px;">View: Patient bills</span>
<span class="t" style="left:1208.5px;top:381.4px;font-size:18.0px;font-weight:400;color:#444444;letter-spacing:-0.35px;">Search:</span>
<span class="t" style="left:1369.4px;top:237.7px;font-size:14.5px;font-weight:400;color:#333333;letter-spacing:0.58px;">Billing</span>
<span class="t" style="left:1302.9px;top:262.2px;font-size:14.5px;font-weight:400;color:#333333;letter-spacing:0.50px;">View Selected Bill Report</span>
<span class="t" style="left:1319.4px;top:286.2px;font-size:14.5px;font-weight:400;color:#ffffff;letter-spacing:0.40px;">Finalize Selected Bill</span>
<span class="t" style="left:1321.4px;top:310.7px;font-size:14.5px;font-weight:400;color:#ffffff;letter-spacing:0.50px;">Unlock Selected Bill</span>
<span class="t" style="left:326.6px;top:379.0px;font-size:15.5px;font-weight:400;color:#333333;letter-spacing:0.78px;">Copy</span>
<span class="t" style="left:377.1px;top:379.0px;font-size:15.5px;font-weight:400;color:#333333;letter-spacing:-1.42px;">CSV</span>
<span class="t" style="left:418.9px;top:379.0px;font-size:15.5px;font-weight:400;color:#333333;letter-spacing:-0.42px;">Excel</span>
<span class="t" style="left:467.2px;top:379.0px;font-size:15.5px;font-weight:400;color:#333333;letter-spacing:0.14px;">Print</span>
<span class="t" style="left:390.6px;top:432.0px;font-size:16.0px;font-weight:700;color:#3b3b3b;letter-spacing:-0.77px;">Bill No</span>
<span class="t" style="left:467.4px;top:432.0px;font-size:16.0px;font-weight:700;color:#3b3b3b;letter-spacing:-0.50px;">Ref</span>
<span class="t" style="left:523.4px;top:432.0px;font-size:16.0px;font-weight:700;color:#3b3b3b;letter-spacing:0.32px;">Patient</span>
<span class="t" style="left:731.1px;top:432.0px;font-size:16.0px;font-weight:700;color:#3b3b3b;letter-spacing:0.59px;">Created On</span>
<span class="t" style="left:894.2px;top:432.0px;font-size:16.0px;font-weight:700;color:#3b3b3b;letter-spacing:0.36px;">Net Amount</span>
<span class="t" style="left:1018.8px;top:432.0px;font-size:16.0px;font-weight:700;color:#3b3b3b;letter-spacing:0.20px;">Amount Paid</span>
<span class="t" style="left:1151.0px;top:432.0px;font-size:16.0px;font-weight:700;color:#3b3b3b;letter-spacing:0.09px;">Discount</span>
<span class="t" style="left:1251.0px;top:432.0px;font-size:16.0px;font-weight:700;color:#3b3b3b;letter-spacing:0.87px;">Copayment</span>
<span class="t" style="left:1376.4px;top:432.0px;font-size:16.0px;font-weight:700;color:#3b3b3b;letter-spacing:0.48px;">Balance</span>
<span class="t" style="left:390.6px;top:466.0px;font-size:16.0px;font-weight:400;color:#222222;letter-spacing:-0.38px;">14692</span>
<span class="t" style="left:523.4px;top:466.0px;font-size:16.0px;font-weight:400;color:#222222;letter-spacing:0.31px;">Kisese Kyden</span>
<span class="t" style="left:731.1px;top:466.0px;font-size:16.0px;font-weight:400;color:#222222;letter-spacing:0.27px;">Oct 7, 2025 3:09 pm</span>
<span class="t" style="left:950.2px;top:466.0px;font-size:16.0px;font-weight:400;color:#222222;letter-spacing:-1.05px;">200.00</span>
<span class="t" style="left:1093.9px;top:466.0px;font-size:16.0px;font-weight:400;color:#222222;letter-spacing:0.21px;">0.00</span>
<span class="t" style="left:1194.4px;top:466.0px;font-size:16.0px;font-weight:400;color:#222222;letter-spacing:0.25px;">0.00</span>
<span class="t" style="left:1320.4px;top:466.0px;font-size:16.0px;font-weight:400;color:#222222;letter-spacing:0.25px;">0.00</span>
<span class="t" style="left:1396.9px;top:466.0px;font-size:16.0px;font-weight:400;color:#d9534f;letter-spacing:0.37px;">200.00</span>
<span class="t" style="left:390.6px;top:498.6px;font-size:16.0px;font-weight:400;color:#222222;letter-spacing:-0.38px;">14690</span>
<span class="t" style="left:523.4px;top:498.6px;font-size:16.0px;font-weight:400;color:#222222;letter-spacing:0.61px;">Test Pttt Halima Kennedy</span>
<span class="t" style="left:731.1px;top:498.6px;font-size:16.0px;font-weight:400;color:#222222;letter-spacing:-0.02px;">Oct 7, 2025 2:16 pm</span>
<span class="t" style="left:950.2px;top:498.6px;font-size:16.0px;font-weight:400;color:#222222;letter-spacing:-1.05px;">200.00</span>
<span class="t" style="left:1093.9px;top:498.6px;font-size:16.0px;font-weight:400;color:#222222;letter-spacing:0.21px;">0.00</span>
<span class="t" style="left:1194.4px;top:498.6px;font-size:16.0px;font-weight:400;color:#222222;letter-spacing:0.25px;">0.00</span>
<span class="t" style="left:1320.4px;top:498.6px;font-size:16.0px;font-weight:400;color:#222222;letter-spacing:0.25px;">0.00</span>
<span class="t" style="left:1396.9px;top:498.6px;font-size:16.0px;font-weight:400;color:#d9534f;letter-spacing:0.37px;">200.00</span>
<span class="t" style="left:390.6px;top:531.2px;font-size:16.0px;font-weight:400;color:#222222;letter-spacing:-0.38px;">14689</span>
<span class="t" style="left:523.4px;top:531.2px;font-size:16.0px;font-weight:400;color:#222222;letter-spacing:0.71px;">Mwaura Mike</span>
<span class="t" style="left:731.1px;top:531.2px;font-size:16.0px;font-weight:400;color:#222222;letter-spacing:0.24px;">Oct 7, 2025 9:29 am</span>
<span class="t" style="left:934.8px;top:531.2px;font-size:16.0px;font-weight:400;color:#222222;letter-spacing:-0.46px;">1,000.00</span>
<span class="t" style="left:1093.9px;top:531.2px;font-size:16.0px;font-weight:400;color:#222222;letter-spacing:0.21px;">0.00</span>
<span class="t" style="left:1194.4px;top:531.2px;font-size:16.0px;font-weight:400;color:#222222;letter-spacing:0.25px;">0.00</span>
<span class="t" style="left:1320.4px;top:531.2px;font-size:16.0px;font-weight:400;color:#222222;letter-spacing:0.25px;">0.00</span>
<span class="t" style="left:1388.4px;top:531.2px;font-size:16.0px;font-weight:400;color:#d9534f;letter-spacing:-0.43px;">1,000.00</span>
<span class="t" style="left:1393.6px;top:679.0px;font-size:18.0px;font-weight:400;color:#ffffff;letter-spacing:-0.40px;">Chat</span>
</body></html>
